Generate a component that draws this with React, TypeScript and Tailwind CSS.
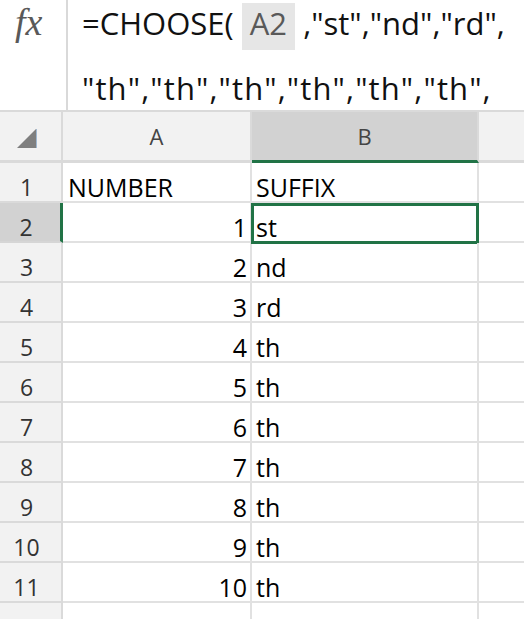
import React from 'react';

// ---------------- Data ----------------
interface SheetRow {
    id: number;
    a: string;
    b: string;
    label?: boolean;
}

const SUFFIXES = ['st', 'nd', 'rd', 'th', 'th', 'th', 'th', 'th', 'th', 'th'];

const rows: SheetRow[] = [
    { id: 1, a: 'NUMBER', b: 'SUFFIX', label: true },
    ...SUFFIXES.map((s, i) => ({ id: i + 2, a: String(i + 1), b: s })),
    { id: 12, a: '', b: '' },
];

const ACTIVE_ROW = 2;

// ---------------- Formula bar ----------------
const FormulaBar = () => (
    <div className="flex h-[112px] border-b-2 border-[#dadada] bg-white">
        <div className="w-[68px] shrink-0 border-r-2 border-[#d9d9d9] pl-[15px] pt-[3px]">
            <span className="font-['Liberation_Serif',serif] text-[38px] italic leading-none text-[#595959]">
                fx
            </span>
        </div>
        <div className="flex flex-col pl-[14px] font-['Open_Sans',sans-serif] text-[31px] text-[#111]">
            <div className="h-[47px] whitespace-pre leading-[47px]">
                {'=CHOOSE( '}
                <span className="inline-block bg-[#e6e6e6] px-[8px] pb-[6px] leading-[41px] text-[#595959]">
                    A2
                </span>
                {' ,"st","nd","rd",'}
            </div>
            <div className="mt-[18px] h-[46px] whitespace-pre leading-[46px] tracking-[1.1px]">
                {'"th","th","th","th","th","th",'}
            </div>
        </div>
    </div>
);

// ---------------- Grid ----------------
const HeaderRow = () => (
    <div className="flex h-[51px] font-['Open_Sans',sans-serif] text-[22px] leading-none text-[#444]">
        {/* select-all corner */}
        <div className="w-[63px] shrink-0 border-b-[3px] border-r-2 border-[#dadada] bg-[#f2f2f2] pl-[17px] pt-[17px]">
            <svg width="20" height="20" viewBox="0 0 20 20">
                <polygon points="19,0 19,19 0,19" fill="#7f7f7f" />
                <line x1="19.5" y1="0" x2="19.5" y2="19" stroke="#9fb7d0" strokeWidth="1" />
            </svg>
        </div>
        <div className="flex w-[189px] shrink-0 items-center justify-center border-b-[3px] border-r-2 border-[#dadada] bg-[#f2f2f2]">
            A
        </div>
        <div className="flex w-[227px] shrink-0 items-center justify-center border-b-[3px] border-r-2 border-r-[#dadada] border-b-[#217346] bg-[#d2d2d2]">
            B
        </div>
        <div className="flex-1 border-b-[3px] border-[#dadada] bg-[#f2f2f2]" />
    </div>
);

const DataRow = ({ row }: { row: SheetRow }) => {
    const active = row.id === ACTIVE_ROW;

    return (
        <div className="flex h-[40px] font-['Open_Sans',sans-serif] text-black">
            {/* Row number */}
            <div
                className={
                    active
                        ? 'w-[63px] shrink-0 border-b-2 border-r-[3px] border-b-[#d6d6d6] border-r-[#217346] bg-[#d2d2d2] pr-[8px] pt-[13px] text-center text-[23px] leading-[23px] text-[#333]'
                        : 'w-[63px] shrink-0 border-b-2 border-r-2 border-[#dadada] bg-[#f2f2f2] pr-[8px] pt-[13px] text-center text-[23px] leading-[23px] text-[#333]'
                }
            >
                {row.id}
            </div>

            {/* Column A */}
            <div
                className={
                    row.label
                        ? 'w-[189px] shrink-0 border-b-2 border-r-2 border-[#e1e1e1] pl-[5px] pt-[12px] text-[25px] leading-[25px]'
                        : 'w-[189px] shrink-0 border-b-2 border-r-2 border-[#e1e1e1] pr-[3px] pt-[12px] text-right text-[25px] leading-[25px]'
                }
            >
                {row.a}
            </div>

            {/* Column B */}
            <div className="relative w-[227px] shrink-0 border-b-2 border-r-2 border-[#e1e1e1] pl-[4px] pt-[12px] text-[25px] leading-[25px]">
                {row.b}
                {active && (
                    <div className="absolute -bottom-[3px] -left-[1px] -right-[2px] top-0 border-[3px] border-[#217346]" />
                )}
            </div>

            {/* Column C */}
            <div className="flex-1 border-b-2 border-[#e1e1e1]" />
        </div>
    );
};

// ---------------- App ----------------
export default function App() {
    return (
        <div className="h-[619px] w-[524px] overflow-hidden bg-white">
            <FormulaBar />
            <HeaderRow />
            {rows.map((row) => (
                <DataRow key={row.id} row={row} />
            ))}
        </div>
    );
}
